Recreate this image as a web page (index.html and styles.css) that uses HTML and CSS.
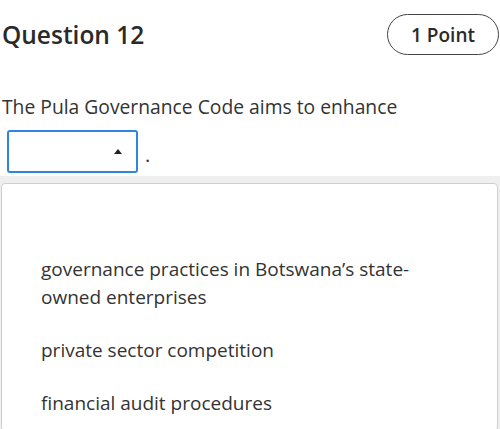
FILE: index.html
```html
<!DOCTYPE html>
<html lang="en">
<head>
<meta charset="utf-8">
<title>Question 12</title>
<link rel="stylesheet" href="styles.css">
</head>
<body>
<div class="page">
  <header class="q-header">
    <h2 class="q-title">Question 12</h2>
    <span class="q-points">1 Point</span>
  </header>
  <p class="q-text">The Pula Governance Code aims to enhance</p>
  <div class="answer-row">
    <div class="select" role="combobox" aria-expanded="true">
      <span class="caret"></span>
    </div>
    <span class="period">.</span>
  </div>
  <div class="dropdown-wrap">
    <ul class="listbox" role="listbox">
      <li class="option empty" role="option"></li>
      <li class="option" role="option">governance practices in Botswana’s state-owned enterprises</li>
      <li class="option" role="option">private sector competition</li>
      <li class="option" role="option">financial audit procedures</li>
    </ul>
  </div>
</div>
</body>
</html>
```
FILE: styles.css
```css
* { box-sizing: border-box; }
html, body {
  margin: 0;
  padding: 0;
  background: #fff;
}
body {
  font-family: "Open Sans", "Liberation Sans", sans-serif;
  color: #333;
  width: 500px;
  height: 429px;
  overflow: hidden;
}
.page {
  padding: 14px 1px 0 2px;
}
.q-header {
  display: flex;
  justify-content: space-between;
  align-items: center;
}
.q-title {
  margin: 0;
  font-size: 24.5px;
  font-weight: 600;
  line-height: 32px;
  color: #2a2a2a;
}
.q-points {
  display: inline-flex;
  align-items: center;
  height: 41px;
  padding: 0 23px;
  border: 1px solid #444;
  border-radius: 21px;
  font-size: 19px;
  font-weight: 600;
  color: #2a2a2a;
}
.q-text {
  margin: 37px 0 0;
  font-size: 19.3px;
  line-height: 30px;
}
.answer-row {
  display: flex;
  align-items: center;
  margin-top: 8px;
  padding-left: 5px;
}
.select {
  width: 131px;
  height: 43px;
  border: 2px solid #2f86de;
  border-radius: 3px;
  display: flex;
  align-items: center;
  justify-content: flex-end;
  padding-right: 14px;
  background: #fff;
}
.caret {
  width: 0;
  height: 0;
  border-left: 4.5px solid transparent;
  border-right: 4.5px solid transparent;
  border-bottom: 5px solid #222;
}
.period {
  margin-left: 7px;
  font-size: 20px;
  line-height: 30px;
  padding-top: 6px;
}
.dropdown-wrap {
  margin: 3px -1px 0 -2px;
  background: #efefef;
  padding: 7px 2px 0 1px;
}
.listbox {
  list-style: none;
  margin: 0;
  padding: 6px 0 0;
  background: #fff;
  border: 1px solid #cfcfcf;
  border-radius: 4px;
}
.option {
  padding: 12px 40px 13px 39px;
  font-size: 19px;
  line-height: 28px;
  color: #333;
}
.option.empty {
  height: 53px;
}
```
